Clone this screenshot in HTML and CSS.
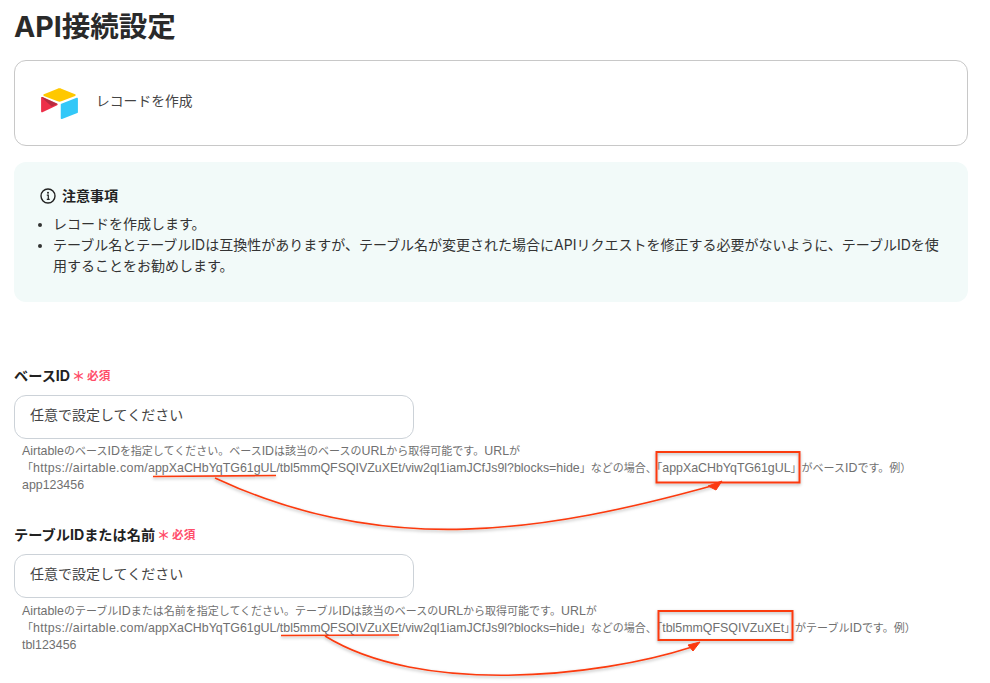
FILE: index.html
```html
<!DOCTYPE html>
<html lang="ja">
<head>
<meta charset="utf-8">
<title>API接続設定</title>
<link rel="stylesheet" href="styles.css">
</head>
<body>
<main class="page">
  <h1 class="title">API接続設定</h1>
  <section class="action-card">
    <svg class="logo" viewBox="0 0 38 32" width="37" height="31" aria-hidden="true">
      <path d="M17 .7 2.9 6.5c-.8.3-.8 1.4 0 1.700l14.200 5.600c1.200.5 2.600.5 3.800 0l14.200-5.600c.8-.3.8-1.400 0-1.700L20.900.7C19.600.2 18.300.2 17 .7z" fill="#ffc800"/>
      <path d="M20.300 17.100v14c0 .7.7 1.100 1.300.9l15.800-6.100c.4-.2.6-.5.6-.9v-14c0-.7-.7-1.100-1.300-.9l-15.800 6.100c-.4.2-.6.500-.6.900z" fill="#33c8f8"/>
      <path d="M16.600 17.800 1.400 25.100c-.6.300-1.400-.1-1.400-.8V10.100c0-.3.100-.5.300-.6.100-.1.200-.2.400-.2.200-.1.500-.1.700 0l15.500 7.200c.8.300.5.100-.3 1.300z" fill="#ed3049"/>
      <path d="M16.600 16.500 11 19.200.3 9.500c.1-.1.200-.2.400-.2.200-.1.500-.1.700 0l15.200 6.700c.4.200.4.300 0 .5z" fill="#a52a3e" opacity=".75"/>
    </svg>
    <span class="action-name">レコードを作成</span>
  </section>
  <section class="notice">
    <h2 class="notice-title">
      <svg class="info-icon" viewBox="0 0 16 16" width="16" height="16" aria-hidden="true">
        <circle cx="8" cy="8" r="7" fill="none" stroke="#222" stroke-width="1.400"/>
        <circle cx="8" cy="4.800" r="1" fill="#222"/>
        <path d="M6.800 7.200H8.300V11.200M6.800 11.400H9.700" fill="none" stroke="#222" stroke-width="1.200"/>
      </svg>
      注意事項
    </h2>
    <ul class="notice-list">
      <li>レコードを作成します。</li>
      <li>テーブル名とテーブルIDは互換性がありますが、テーブル名が変更された場合にAPIリクエストを修正する必要がないように、テーブルIDを使用することをお勧めします。</li>
    </ul>
  </section>
  <div class="field first">
    <label class="label">ベースID<span class="star">＊</span><span class="required">必須</span></label>
    <div class="input">任意で設定してください</div>
    <p class="help"><span class="en">Airtable</span>のベース<span class="en">ID</span>を指定してください。ベース<span class="en">ID</span>は該当のベースの<span class="en">URL</span>から取得可能です。<span class="en">URL</span>が「<span class="en"><span class="host">https://airtable.com/</span>appXaCHbYqTG61gUL/tbl5mmQFSQIVZuXEt/viw2ql1iamJCfJs9l?blocks=hide</span>」などの場合、「<span class="en">appXaCHbYqTG61gUL</span>」がベース<span class="en">ID</span>です。例）<span class="en">app123456</span></p>
  </div>
  <div class="field">
    <label class="label">テーブルIDまたは名前<span class="star">＊</span><span class="required">必須</span></label>
    <div class="input">任意で設定してください</div>
    <p class="help"><span class="en">Airtable</span>のテーブル<span class="en">ID</span>または名前を指定してください。テーブル<span class="en">ID</span>は該当のベースの<span class="en">URL</span>から取得可能です。<span class="en">URL</span>が「<span class="en"><span class="host">https://airtable.com/</span>appXaCHbYqTG61gUL/tbl5mmQFSQIVZuXEt/viw2ql1iamJCfJs9l?blocks=hide</span>」などの場合、「<span class="en">tbl5mmQFSQIVZuXEt</span>」がテーブル<span class="en">ID</span>です。例）<span class="en">tbl123456</span></p>
  </div>
  <svg class="annotations" viewBox="0 0 990 683" width="990" height="683" aria-hidden="true">
    <defs>
      <filter id="shadow" x="-10%" y="-10%" width="120%" height="130%">
        <feDropShadow dx="0" dy="1.500" stdDeviation="1.500" flood-color="#000" flood-opacity=".3"/>
      </filter>
    </defs>
    <g filter="url(#shadow)" fill="none" stroke="#fb3a10">
      <path d="M153 476.500 276 475.500" stroke-width="1.600"/>
      <rect x="656.500" y="452" width="143" height="30.500" stroke-width="2"/>
      <path d="M215 478C385 558 546 532 715 485" stroke-width="1.600"/>
      <path d="M281 635.500 399 635" stroke-width="1.600"/>
      <rect x="658.500" y="611" width="134" height="29" stroke-width="2"/>
      <path d="M325 636C420 695 596 678 692 647" stroke-width="1.600"/>
    </g>
    <path d="M708 486 722 481 716 490Z" fill="#fb3a10" stroke="#fb3a10"/>
    <path d="M688 645 700 642 693 651Z" fill="#fb3a10" stroke="#fb3a10"/>
  </svg>
</main>
</body>
</html>
```
FILE: styles.css
```css
* { box-sizing: border-box; }
html, body { margin: 0; padding: 0; height: 683px; overflow: hidden; background: #fff; }
body {
  font-family: "Inter", "Noto Sans CJK JP", sans-serif;
  color: #222;
}
.page { position: relative; width: 990px; height: 683px; padding: 8px 22px 0 14px; overflow: hidden; }
.title { margin: 0; font-size: 28.500px; line-height: 38px; font-weight: 700; color: #2a2a2a; }
.action-card {
  margin-top: 14px;
  height: 86px;
  display: flex;
  align-items: center;
  gap: 18px;
  padding: 0 26px;
  border: 1px solid #c8c8c8;
  border-radius: 12px;
}
.logo { flex: none; }
.action-name { margin-bottom: 6px; font-size: 13.800px; color: #444; }
.notice {
  margin-top: 16px;
  height: 140px;
  padding: 24px 26px 0 24px;
  background: #f2faf9;
  border-radius: 12px;
}
.notice-title {
  margin: 0;
  display: flex;
  align-items: center;
  gap: 6px;
  font-size: 14px;
  line-height: 20px;
  font-weight: 700;
  padding-left: 2px;
}
.info-icon { flex: none; }
.notice-list { margin: 7px 0 0; padding: 0 0 0 15px; font-size: 14px; line-height: 21px; color: #333; }
.notice-list li::marker { font-size: 12px; }
.field { margin-top: 31px; }
.field.first { margin-top: 64px; }
.label { display: flex; align-items: center; font-size: 14.200px; line-height: 20px; font-weight: 700; color: #222; }
.star { color: #ff4d6a; font-size: 13px; margin-left: 2px; }
.required { color: #ff4d6a; font-size: 11.600px; margin-left: 2px; }
.input {
  margin-top: 9px;
  width: 400px;
  height: 44px;
  padding: 0 15px 7px;
  display: flex;
  align-items: center;
  border: 1px solid #ccd2d8;
  border-radius: 12px;
  font-size: 14px;
  color: #444;
}
.help { margin: 4px 0 0; padding: 0 20px 0 8px; font-size: 11px; line-height: 17px; color: #707070; }
.field + .field .help { margin-top: 5px; }
.en { font-family: "Liberation Sans", sans-serif; font-size: 12.400px; }
.host { letter-spacing: .33px; }
.annotations { position: absolute; left: 0; top: 0; pointer-events: none; }
```
